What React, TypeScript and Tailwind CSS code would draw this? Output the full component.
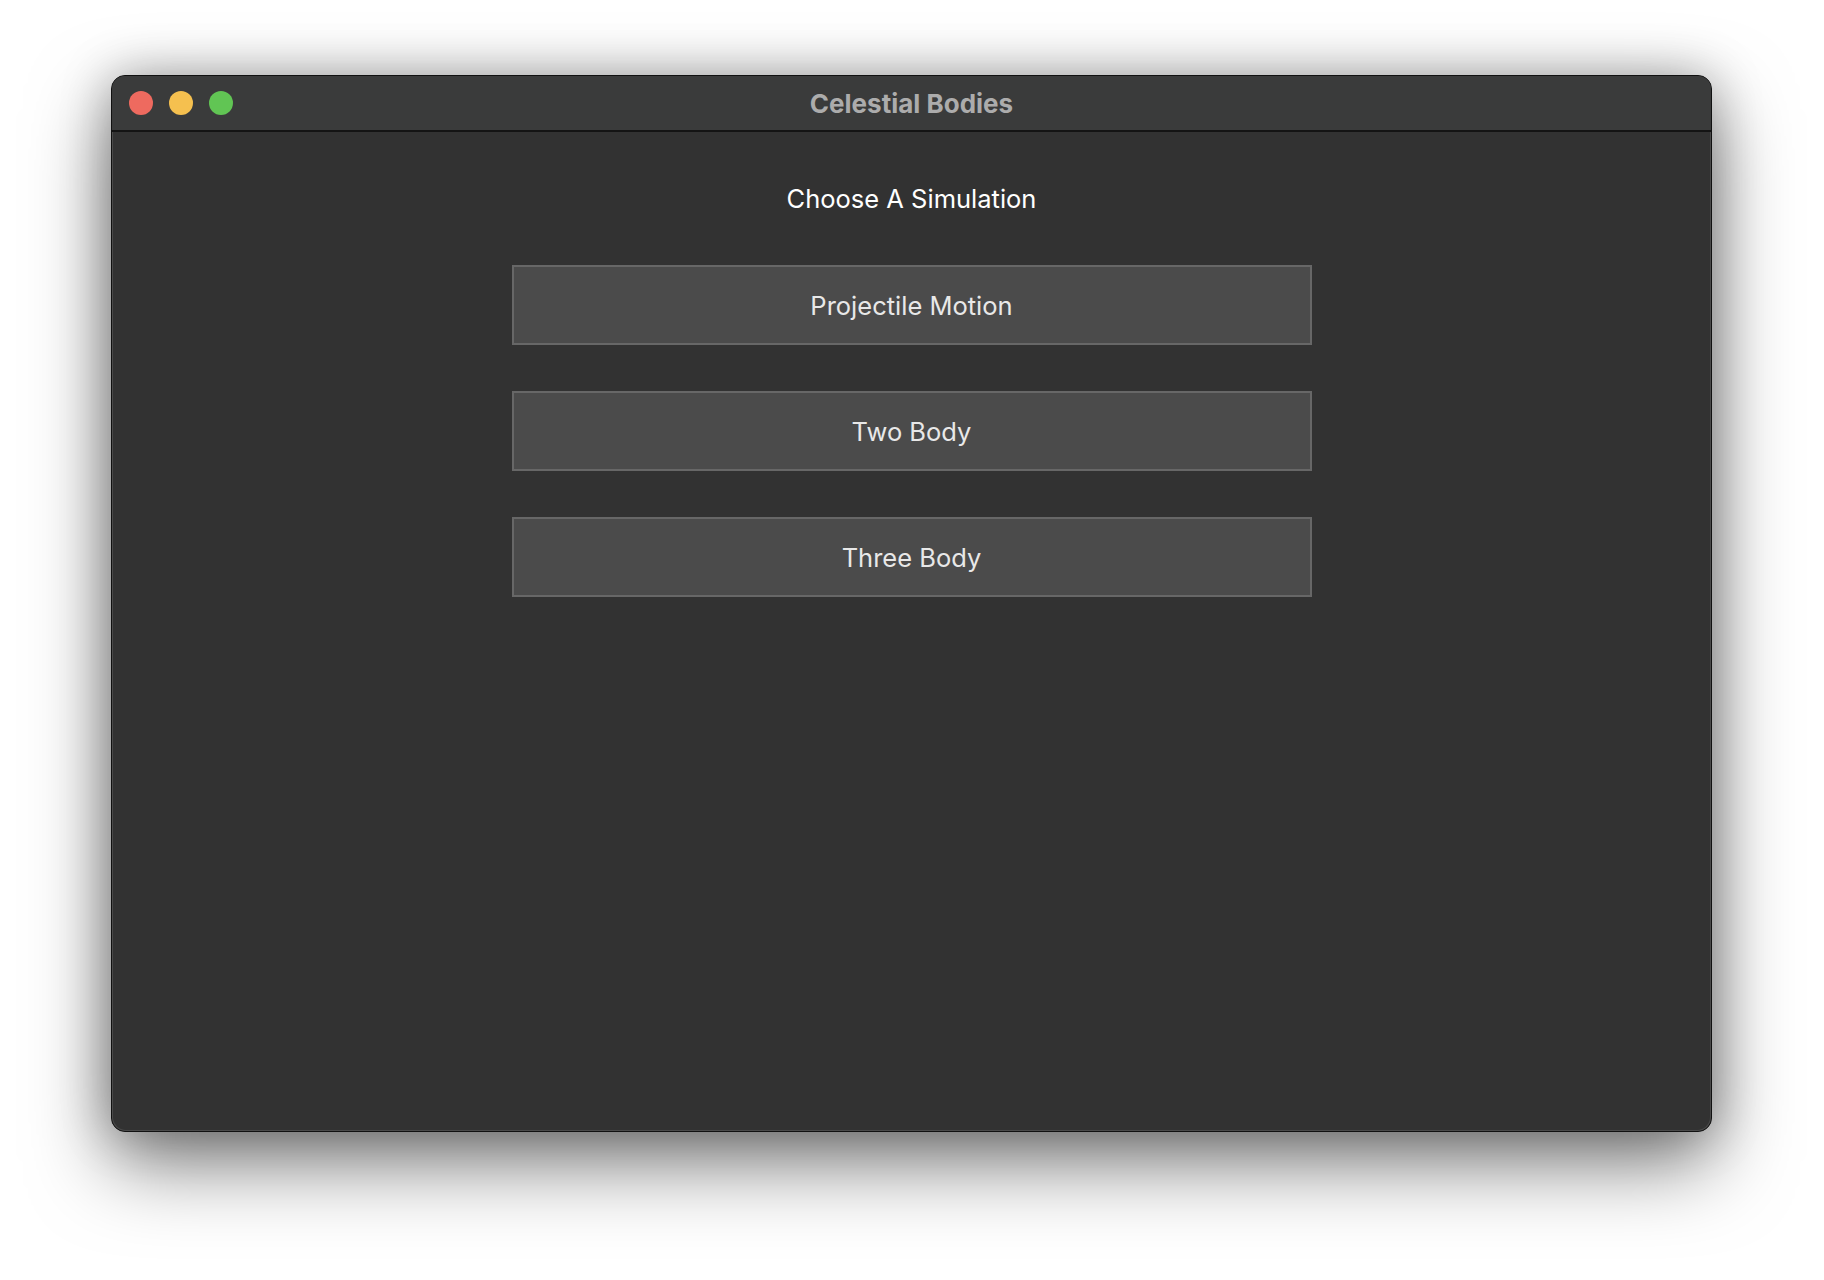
import React from "react";

const simulations = ["Projectile Motion", "Two Body", "Three Body"];

const TrafficLights = () => (
  <div className="flex items-center gap-[16px] pl-[17px]">
    <span className="w-[24px] h-[24px] rounded-full bg-[#ee6a5f]" />
    <span className="w-[24px] h-[24px] rounded-full bg-[#f5c04f]" />
    <span className="w-[24px] h-[24px] rounded-full bg-[#61c554]" />
  </div>
);

export default function App() {
  return (
    <div className="w-[1824px] h-[1280px] bg-white pt-[75px] pl-[111px] font-['Inter','Liberation_Sans',sans-serif] antialiased">
      {/* WINDOW */}
      <div className="w-[1601px] h-[1057px] rounded-[14px] overflow-hidden bg-[#323232] border border-[#111] shadow-[0_32px_80px_rgba(0,0,0,0.5),0_0_50px_rgba(0,0,0,0.28)] flex flex-col">
        {/* TITLE BAR */}
        <div className="relative h-[56px] shrink-0 bg-[#3a3b3b] border-b-2 border-[#141414] flex items-center">
          <TrafficLights />
          <div className="absolute inset-0 flex items-center justify-center text-[26px] font-bold text-[#acacac]">
            Celestial Bodies
          </div>
        </div>

        {/* CONTENT */}
        <div className="flex-1 flex flex-col items-center pt-[51px] border-x border-b border-[#4a4a4a] rounded-b-[14px]">
          <h1 className="text-[25.5px] leading-[32px] text-white">Choose A Simulation</h1>
          <div className="mt-[50px] flex flex-col gap-[46px]">
            {simulations.map((name) => (
              <button
                key={name}
                className="w-[800px] h-[80px] pt-[2px] bg-[#4b4b4b] border-2 border-[#676767] text-[25.5px] text-[#e8e8e8] flex items-center justify-center"
              >
                {name}
              </button>
            ))}
          </div>
        </div>
      </div>
    </div>
  );
}
